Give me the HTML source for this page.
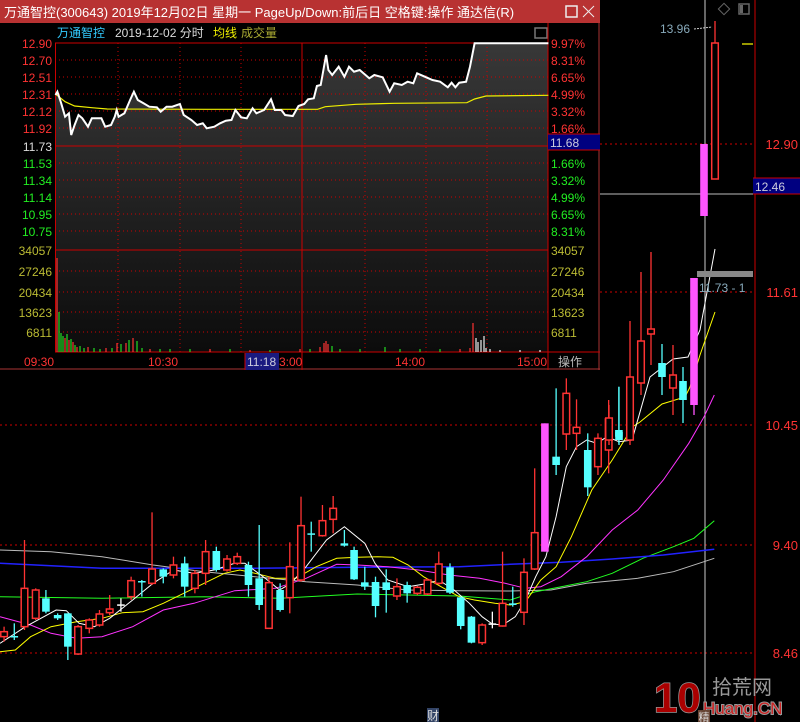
<!DOCTYPE html>
<html><head><meta charset="utf-8"><style>
html,body{margin:0;padding:0;background:#000;width:800px;height:722px;overflow:hidden}
svg{display:block}
text{font-family:"Liberation Sans","Noto Sans CJK SC",sans-serif}
</style></head><body>
<svg id="s" width="800" height="722" xmlns="http://www.w3.org/2000/svg"></svg>
<script>
const S=document.getElementById('s');let h='';
function L(x1,y1,x2,y2,c,w,d){h+=`<line x1="${x1}" y1="${y1}" x2="${x2}" y2="${y2}" stroke="${c}" stroke-width="${w||1}" ${d?'stroke-dasharray="'+d+'"':''}/>`}
function R(x,y,w,ht,f,st){h+=`<rect x="${x}" y="${y}" width="${w}" height="${ht}" fill="${f}" ${st?'stroke="'+st+'" stroke-width="1.5"':''}/>`}
function T(x,y,t,c,sz,a,ex){h+=`<text x="${x}" y="${y}" fill="${c}" font-size="${sz||12}" ${a?'text-anchor="'+a+'"':''} ${ex||''}>${t}</text>`}
function P(pts,c,w,f){h+=`<polyline points="${pts.map(p=>p.join(',')).join(' ')}" fill="${f||'none'}" stroke="${c}" stroke-width="${w||1}"/>`}
[[144,'12.90'],[292,'11.61'],[425,'10.45'],[545,'9.40'],[653,'8.46']].forEach(([y,t])=>{L(0,y,753,y,'#c00',1,'2 3');T(798,y+5,t,'#f33',13,'end')});
L(755,0,755,722,'#c00',1);
L(600,194,755,194,'#bbb',1);
L(705,0,705,722,'#ccc',1);
const z=p=>p.map(([x,y])=>[ (x/1.96).toFixed(1),(370+y/3).toFixed(1)]);
P(z([[0,540],[100,545],[200,560],[300,585],[400,605],[500,620],[600,635],[700,645],[800,660],[900,662],[1000,663],[1080,660],[1150,640],[1250,625],[1320,605],[1400,565]]),'#bbb');
P(z([[0,680],[200,685],[400,680],[550,685],[700,672],[900,678],[1000,690],[1050,665],[1100,650],[1150,635],[1200,610],[1260,565],[1320,530],[1360,505],[1400,452]]),'#2f2');
P(z([[0,580],[200,595],[300,595],[500,595],[700,592],[900,590],[1000,583],[1100,577],[1200,567],[1300,555],[1400,538]]),'#22f',1.5);
P(z([[0,740],[60,765],[100,790],[150,805],[200,800],[260,770],[320,720],[380,700],[460,662],[540,655],[600,625],[660,583],[700,585],[760,590],[820,600],[880,615],[940,625],[990,640],[1030,655],[1060,650],[1100,620],[1150,560],[1200,480],[1250,420],[1300,330],[1350,220],[1380,140],[1400,75]]),'#f3f');
P(z([[0,845],[30,840],[60,800],[100,770],[150,755],[200,745],[240,728],[280,725],[320,700],[360,670],[400,640],[440,610],[470,600],[500,610],[540,625],[580,625],[620,590],[660,565],[700,562],[740,560],[770,562],[800,585],[830,620],[870,655],[900,680],[930,690],[970,700],[1000,705],[1030,695],[1060,630],[1090,590],[1120,500],[1160,360],[1200,270],[1240,170]]).concat([[640,422],[662,404],[685,397],[690,387],[700,355],[715,312]]),'#ff0');
P(z([[0,820],[50,770],[110,720],[130,722],[155,760],[185,770],[215,745],[260,690],[300,640],[340,600],[380,610],[420,600],[460,580],[480,580],[520,625],[548,660],[570,640],[600,590],[640,510],[675,470],[715,520],[735,580],[760,630],[800,650],[840,640],[860,630],[890,660],[920,700],[945,740],[965,762],[985,765],[1010,740],[1030,690],[1050,620],[1070,560],[1090,440],[1110,290],[1130,230],[1150,210],[1170,220],[1190,200],[1213,215]]).concat([[632,440],[650,377],[673,359],[688,357],[700,330],[715,249]]),'#fff');
const C=[[8,785,800,770,815,'r'],[28,798,802,760,810,'c'],[48,655,770,510,780,'r'],[70,660,745,655,750,'r'],[90,685,725,660,730,'c'],[113,735,745,730,750,'c'],[133,730,830,730,870,'c'],[153,770,852,765,855,'r'],[175,750,775,745,790,'r'],[195,732,765,720,770,'r'],[215,717,728,675,735,'r'],[237,703,707,685,725,'w'],[257,632,680,620,690,'r'],[278,633,637,630,680,'c'],[298,597,640,427,645,'r'],[320,598,620,595,640,'c'],[340,585,615,560,625,'r'],[362,580,650,560,680,'c'],[382,610,655,600,670,'r'],[403,545,610,510,645,'r'],[424,543,600,530,605,'c'],[445,567,600,555,605,'r'],[465,560,580,548,585,'r'],[487,585,645,575,680,'c'],[508,625,705,465,720,'c'],[527,638,775,620,775,'r'],[549,660,720,640,725,'c'],[568,590,683,517,730,'r'],[590,467,630,380,635,'r'],[610,490,494,455,545,'c'],[632,452,497,405,500,'r'],[653,415,448,378,490,'r'],[675,520,527,480,530,'c'],[694,540,628,530,630,'c'],[715,637,650,590,660,'c'],[736,636,708,620,742,'c'],[757,637,660,598,728,'c'],[778,650,678,625,690,'r'],[798,645,670,635,698,'c'],[818,652,670,648,675,'r'],[838,630,672,625,675,'r'],[860,582,640,545,645,'r'],[882,592,668,580,672,'c'],[903,682,768,680,778,'c'],[924,740,818,738,820,'c'],[945,765,818,760,825,'r'],[965,760,764,725,775,'w'],[985,700,768,545,770,'r'],[1005,700,705,650,710,'c'],[1027,607,727,565,765,'r'],[1048,488,597,295,600,'r'],[1068,160,545,160,545,'m'],[1090,260,285,55,315,'c'],[1110,70,192,25,240,'r'],[1130,172,190,88,240,'r'],[1152,240,352,190,378,'c'],[1172,205,290,190,315,'r'],[1193,147,240,90,310,'r'],[1213,180,200,50,220,'c']];
const C2=C.map(c=>[c[0]/1.96,370+c[1]/3,370+c[2]/3,370+c[3]/3,370+c[4]/3,c[5]]).concat([
[609,418,440,405,445,'r'],[619,432,440,387,445,'c'],[630,377,440,321,445,'r'],[641,341,383,272,395,'r'],[651,329,334,252,365,'r'],[662,363,377,344,395,'c'],[673,375,388,345,415,'r'],[683,381,400,367,423,'c'],[694,278,405,278,415,'m'],[704,144,216,144,216,'m'],[715,43,179,21,179,'r']]);
C2.forEach(([x,t,b,wt,wb,k])=>{const col={r:'#f33',c:'#5ff',m:'#f5f',w:'#fff'}[k];
 L(x,wt,x,wb,col,1.3);
 if(k=='r')R(x-3.3,t,6.6,Math.max(b-t,1.5),'#000',col);
 else R(x-3.8,t,7.6,Math.max(b-t,1.5),col);});
T(660,33,'13.96','#8ab',12);L(694,29,712,27,'#ccc',1,'2 1');
h+=`<rect x="720" y="5" width="8" height="8" transform="rotate(45 724 9)" fill="none" stroke="#666"/>`;
R(739,4,10,10,'none','#666');R(740,5,3,8,'#666');
L(742,44,753,44,'#cc0',1.5);
R(753,178,47,16,'#000080');L(753,178,800,178,'#c00',1);L(753,194,800,194,'#c00',1);
T(755,191,'12.46','#ccd',12);
R(697,271,56,6,'#888');T(699,292,'11.73 - 1','#8ab',12);
// logo
T(654,712,'10','#a00',42,'','font-weight="bold" stroke="#999" stroke-width="1.5" paint-order="stroke"');
T(712,694,'拾荒网','#999',20);
T(703,714,'Huang.CN','#c22',17,'','stroke="#999" stroke-width="2" paint-order="stroke"');
R(427,708,12,14,'#346');T(433,720,'财','#ddd',12,'middle');
R(698,710,12,12,'#643');T(704,721,'精','#ddd',11,'middle');
// popup
R(0,0,600,370,'#000');
R(0,0,600,23,'#b83232');
T(4,17,'万通智控(300643) 2019年12月02日 星期一 PageUp/Down:前后日 空格键:操作 通达信(R)','#fff',13);
R(566,6,11,11,'none','#eee');L(583,6,594,17,'#eee');L(594,6,583,17,'#eee');
L(599,23,599,370,'#a33',1);L(0,369,600,369,'#a33',1);
T(57,37,'万通智控','#3cf',12);T(115,37,'2019-12-02 分时','#ddd',12);T(213,37,'均线','#ee0',12);T(241,37,'成交量','#aa3',12);
R(535,28,12,10,'none','#777');
h+=`<defs><linearGradient id="g" x1="0" y1="0" x2="0" y2="1"><stop offset="0" stop-color="#383838"/><stop offset="1" stop-color="#0c0c0c"/></linearGradient></defs>`;
const zp=p=>p.map(([x,y])=>[(x/2.613).toFixed(1),(y/3).toFixed(1)]);
const line=zp([[145,285],[150,275],[160,310],[170,350],[180,340],[186,405],[195,375],[205,345],[215,355],[230,380],[240,355],[265,355],[275,380],[290,375],[300,350],[305,330],[310,350],[325,340],[340,300],[350,275],[360,300],[375,310],[390,320],[410,322],[420,335],[435,320],[450,320],[470,312],[480,345],[500,360],[515,375],[530,370],[540,385],[560,380],[575,370],[590,362],[605,360],[615,330],[630,352],[645,355],[660,325],[670,340],[690,330],[708,298],[718,330],[735,330],[745,345],[765,348],[780,318],[795,312],[805,298],[820,295],[828,258],[838,255],[845,210],[852,165],[858,210],[868,225],[885,200],[900,230],[912,200],[925,215],[940,210],[965,235],[978,225],[1000,232],[1018,275],[1030,250],[1050,255],[1065,245],[1080,250],[1090,220],[1110,230],[1130,240],[1150,245],[1170,262],[1180,248],[1190,262],[1200,248],[1218,245],[1228,200],[1240,130],[1433,130]]);
h+=`<polygon points="55.5,352 ${line.map(p=>p.join(',')).join(' ')} 548,352" fill="url(#g)"/>`;
[60,77,94,111,128,163,180,197,214,231,271,292,312,332].forEach(y=>L(55,y,548,y,'#c00',1,'1 3'));
[118,180,241,365,426,487].forEach(x=>L(x,43,x,352,'#c00',1,'1 3'));
L(55,43,548,43,'#c00');L(55,146,548,146,'#c00');L(55,250,548,250,'#c00');L(55,352,600,352,'#c00');
L(55.5,43,55.5,352,'#c00');L(302,43,302,370,'#c00');L(548,23,548,370,'#c00');
P(zp([[145,282],[170,305],[195,318],[240,323],[280,327],[540,328],[830,328],[850,320],[930,313],[1030,310],[1220,308],[1240,297],[1270,288],[1433,286]]),'#ee0',1.2);
P(line,'#fff',2);
const V=[[57,258,'r'],[59,312,'g'],[61,333,'g'],[63,336,'g'],[65,338,'r'],[67,334,'g'],[69,340,'r'],[71,339,'g'],[73,342,'r'],[75,345,'g'],[77,347,'r'],[80,346,'g'],[84,348,'g'],[88,347,'r'],[94,348,'g'],[100,349,'g'],[106,348,'r'],[112,348,'g'],[117,343,'r'],[121,344,'g'],[126,343,'r'],[129,340,'g'],[133,338,'r'],[137,341,'g'],[142,348,'g'],[150,349,'r'],[160,349,'g'],[170,349,'g'],[190,349,'g'],[210,349,'r'],[230,349,'g'],[250,350,'r'],[270,350,'g'],[300,349,'r'],[310,349,'g'],[320,347,'r'],[324,343,'r'],[326,341,'r'],[328,344,'r'],[332,346,'g'],[340,349,'g'],[360,349,'g'],[385,347,'g'],[400,349,'g'],[420,349,'g'],[440,349,'g'],[460,349,'r'],[470,348,'r'],[473,323,'r'],[476,338,'w'],[478,342,'w'],[481,340,'w'],[484,336,'w'],[486,348,'w'],[490,349,'w'],[500,350,'w'],[520,350,'w'],[540,350,'w']];
V.forEach(([x,y,k])=>L(x,y,x,352,{r:'#f33',g:'#2d2',w:'#eee'}[k],1.2));
[[43,'12.90','9.97%'],[60,'12.70','8.31%'],[77,'12.51','6.65%'],[94,'12.31','4.99%'],[111,'12.12','3.32%'],[128,'11.92','1.66%']].forEach(([y,a,b])=>{T(52,y+5,a,'#f33',12,'end');T(551,y+5,b,'#f33',12)});
T(52,151,'11.73','#ddd',12,'end');
[[163,'11.53','1.66%'],[180,'11.34','3.32%'],[197,'11.14','4.99%'],[214,'10.95','6.65%'],[231,'10.75','8.31%']].forEach(([y,a,b])=>{T(52,y+5,a,'#2e2',12,'end');T(551,y+5,b,'#2e2',12)});
[[250,'34057'],[271,'27246'],[292,'20434'],[312,'13623'],[332,'6811']].forEach(([y,a])=>{T(52,y+5,a,'#bb3',12,'end');T(551,y+5,a,'#bb3',12)});
R(548,134,52,16,'#000080');L(548,134,600,134,'#c00');L(548,150,600,150,'#c00');T(550,147,'11.68','#ccd',12);
T(24,366,'09:30','#f33',12);T(148,366,'10:30','#f33',12);R(245,353,34,17,'#1a1a80');L(245,353,245,370,'#c00');T(247,366,'11:18','#ccd',12);T(279,366,'3:00','#f33',12);
T(395,366,'14:00','#f33',12);T(517,366,'15:00','#f33',12);T(558,366,'操作','#bbb',12);
S.innerHTML=h;
</script>
</body></html>
